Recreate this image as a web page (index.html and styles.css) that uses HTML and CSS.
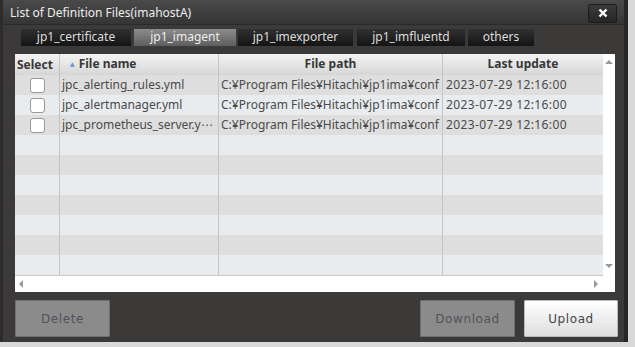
FILE: index.html
```html
<!DOCTYPE html>
<html lang="en">
<head>
  <meta charset="UTF-8" />
  <title>List of Definition Files</title>
  <link rel="stylesheet" href="styles.css">
</head>
<body>

  <div class="dialog">
    <div class="titlebar">
      <span class="title">List of Definition Files(imahostA)</span>
      <button class="close">
        <svg width="10" height="10" viewBox="0 0 10 10"><path d="M1.5 1.5 L8.5 8.5 M8.5 1.5 L1.5 8.5" stroke="#fff" stroke-width="2.4"/></svg>
      </button>
    </div>

    <div class="tabs">
      <div class="tab t1">jp1_certificate</div>
      <div class="tab t2 active">jp1_imagent</div>
      <div class="tab t3">jp1_imexporter</div>
      <div class="tab t4">jp1_imfluentd</div>
      <div class="tab t5">others</div>
    </div>

    <div class="grid-box">
      <div class="grid-main">
        <div class="grid">
          <div class="row head">
            <div class="cell sel">Select</div>
            <div class="cell name"><span class="sort">&#9650;</span>File name</div>
            <div class="cell center">File path</div>
            <div class="cell center">Last update</div>
          </div>
          <div id="rows"></div>
        </div>
        <div class="vscroll">
          <span class="arr up"></span>
          <span class="arr down"></span>
        </div>
      </div>
      <div class="hscroll">
        <span class="arr left"></span>
        <span class="arr right"></span>
      </div>
    </div>

    <div class="actions">
      <button class="btn disabled">Delete</button>
      <div class="right">
        <button class="btn disabled">Download</button>
        <button class="btn primary">Upload</button>
      </div>
    </div>
  </div>

  <script>
    const files = [
      { name: "jpc_alerting_rules.yml", path: "C:\u00a5Program Files\u00a5Hitachi\u00a5jp1ima\u00a5conf", date: "2023-07-29 12:16:00" },
      { name: "jpc_alertmanager.yml", path: "C:\u00a5Program Files\u00a5Hitachi\u00a5jp1ima\u00a5conf", date: "2023-07-29 12:16:00" },
      { name: "jpc_prometheus_server.y\u22ef", path: "C:\u00a5Program Files\u00a5Hitachi\u00a5jp1ima\u00a5conf", date: "2023-07-29 12:16:00" }
    ];
    const rows = document.getElementById("rows");
    let html = "";
    for (let i = 0; i < 10; i++) {
      const f = files[i];
      html += `<div class="row ${i % 2 ? "even" : "odd"}">` +
        `<div class="cell sel">${f ? '<span class="check"></span>' : ""}</div>` +
        `<div class="cell">${f ? f.name : ""}</div>` +
        `<div class="cell">${f ? f.path : ""}</div>` +
        `<div class="cell date">${f ? f.date : ""}</div></div>`;
    }
    rows.innerHTML = html;
  </script>

</body>
</html>
```

FILE: styles.css
```css
body { margin: 0; background: #d9d9d9; font-family: "Noto Sans", "DejaVu Sans", sans-serif; }

.dialog {
  width: 628px; height: 342px;
  background: #3b3a39;
  border-left: 3px solid #2c2c2c;
  border-right: 4px solid #262626;
  display: flex; flex-direction: column;
  box-sizing: border-box;
}

.titlebar {
  height: 25px;
  background: linear-gradient(#4a4a4a, #353535);
  border-bottom: 1px solid #2a2a2a;
  display: flex; align-items: center; justify-content: space-between;
  padding: 0 7px 0 7px;
  box-sizing: border-box;
}
.title { color: #ececec; font-size: 12px; }
.close {
  width: 29px; height: 19px; margin-top: 2px;
  background: linear-gradient(#3a3a3a, #262626);
  border: 1px solid #1c1c1c; border-radius: 2px;
  display: flex; align-items: center; justify-content: center;
  padding: 0;
}

.tabs { display: flex; margin: 4px 0 0 18px; height: 17px; }
.tab {
  height: 17px; line-height: 16px;
  color: #dcdcdc; font-size: 12px; text-align: center;
  background: linear-gradient(#303030, #141414);
  margin-right: 3px;
}
.tab.active { background: linear-gradient(#8c8c8c, #5e5e5e); color: #eee; }
.t1 { width: 110px; }
.t2 { width: 102px; margin-right: 2px; }
.t3 { width: 115px; margin-right: 4px; }
.t4 { width: 108px; }
.t5 { width: 66px; }

.grid-box {
  margin: 8px 0 0 12px; width: 600px; height: 238px;
  background: #fff;
  display: flex; flex-direction: column;
}
.grid-main { display: flex; flex: 1; }
.grid { width: 588px; }

.row {
  display: grid; grid-template-columns: 45px 159px 224px 160px;
  height: 20px; font-size: 12px; color: #4a4a4a;
}
.row.head {
  height: 21px;
  background: linear-gradient(#f4f4f4, #d6d6d6);
  font-weight: bold; color: #383838;
}
.row.odd { background: #dedede; }
.row.even { background: #e9ecee; }
.row.even:last-child { border-bottom: 1px solid #c9c9c9; }

.cell {
  border-right: 1px solid #c4c4c4;
  padding-left: 2px; line-height: 20px;
  white-space: nowrap; overflow: hidden;
}
.cell:last-child { border-right: none; padding-left: 3px; }
.cell.date { letter-spacing: 0.4px; }
.cell.sel { display: flex; align-items: center; justify-content: center; padding: 0; }
.head .cell.sel { justify-content: flex-start; padding-left: 2px; }
.cell.center { text-align: center; padding: 0; }
.head .cell.name { padding-left: 10px; }
.sort { font-size: 6px; color: #6a8fc0; margin-right: 4px; vertical-align: 2px; }

.check {
  width: 15px; height: 15px;
  background: #fff; border: 1px solid #999; border-radius: 3px;
  box-sizing: border-box;
}

.vscroll {
  width: 12px;
  display: flex; flex-direction: column; justify-content: space-between; align-items: center;
  padding: 6px 0 8px;
  box-sizing: border-box;
}
.hscroll {
  height: 16px;
  display: flex; justify-content: space-between; align-items: center;
  padding: 0 17px 0 4px;
}
.arr { width: 0; height: 0; border: 4px solid transparent; }
.arr.up { border-bottom-color: #999; border-top-width: 0; }
.arr.down { border-top-color: #999; border-bottom-width: 0; }
.arr.left { border-right-color: #999; border-left-width: 0; }
.arr.right { border-left-color: #999; border-right-width: 0; }

.actions {
  display: flex; justify-content: space-between;
  margin: 8px 0 0 12px; width: 603px;
}
.actions .right { display: flex; gap: 9px; }
.btn {
  width: 95px; height: 37px;
  font-family: "DejaVu Sans", sans-serif; font-size: 12px; letter-spacing: 0.6px;
  border-radius: 1px;
}
.btn.disabled { background: #8b8b8b; border: 1px solid #6f6f6f; color: #50535b; }
.btn.primary { background: linear-gradient(#ffffff, #dedede); border: 1px solid #bbb; color: #454545; width: 94px; }
```
